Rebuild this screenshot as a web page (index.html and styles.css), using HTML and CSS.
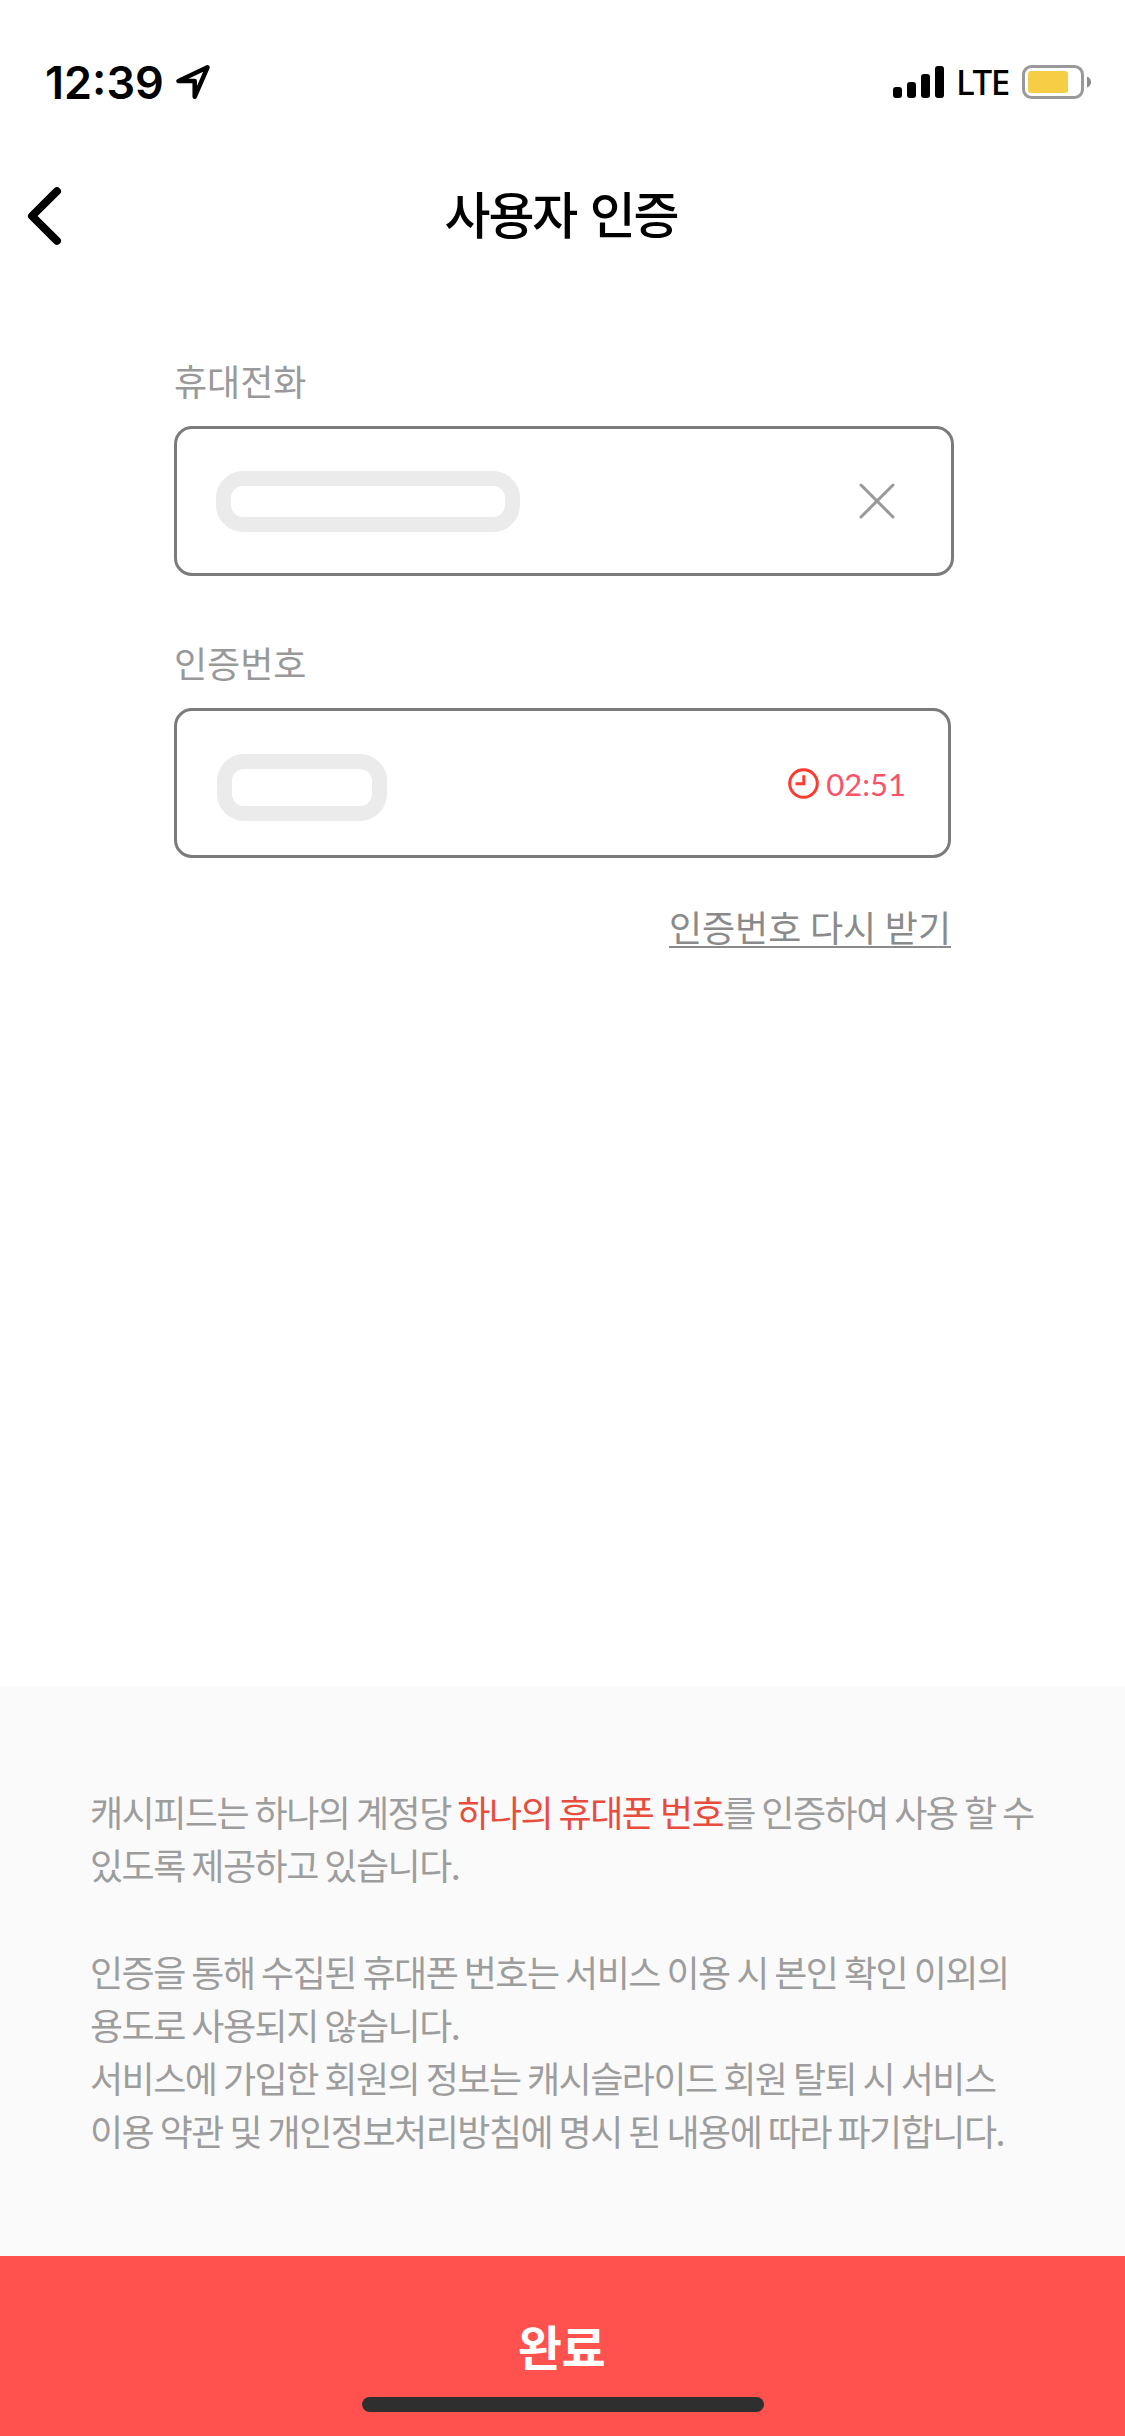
FILE: index.html
```html
<!DOCTYPE html>
<html lang="ko">
<head>
<meta charset="utf-8">
<title>사용자 인증</title>
<link rel="stylesheet" href="styles.css">
</head>
<body>
<div class="screen">
  <div class="status">
    <span class="clock">12:39</span>
    <svg class="location" width="36" height="36" viewBox="0 0 36 36"><path d="M32.2 3 L3.2 16.7 H19.4 V32.5 Z" transform="translate(.3 .3)"/></svg>
    <svg class="signal" width="51" height="32" viewBox="0 0 51 32"><rect x="0" y="21" width="9" height="11" rx="3"/><rect x="14" y="16" width="9" height="16" rx="3"/><rect x="28" y="8" width="9" height="24" rx="3"/><rect x="42" y="0" width="9" height="32" rx="3"/></svg>
    <span class="network">LTE</span>
    <svg class="battery" width="70" height="34" viewBox="0 0 70 34"><rect x="1.5" y="1.5" width="59" height="31" rx="8" fill="none" stroke="#999" stroke-width="3"/><rect x="6" y="6" width="40" height="22" rx="3" fill="#f6ce46"/><path d="M65 11.5 Q69 13 69 17 Q69 21 65 22.5 Z" fill="#8c8c8c"/></svg>
  </div>
  <header class="nav">
    <svg class="back" width="36" height="60" viewBox="0 0 36 60"><path d="M31 5.2 L6 30 L31 54.8"/></svg>
    <h1 class="title">사용자 인증</h1>
  </header>
  <main class="form">
    <label class="label">휴대전화</label>
    <div class="field field-phone">
      <span class="mask mask-phone"></span>
      <svg class="clear" width="36" height="36" viewBox="0 0 36 36"><path d="M2 2 L34 34 M34 2 L2 34"/></svg>
    </div>
    <label class="label">인증번호</label>
    <div class="field field-code">
      <span class="mask mask-code"></span>
      <div class="timer">
        <svg width="32" height="32" viewBox="0 0 32 32"><circle cx="15.5" cy="15.5" r="13.8"/><path d="M15.8 7.3 V15.7 H7.5"/></svg>
        <span>02:51</span>
      </div>
    </div>
    <a class="resend">인증번호 다시 받기</a>
  </main>
  <section class="notice">
    <p>캐시피드는 하나의 계정당 <em>하나의 휴대폰 번호</em>를 인증하여 사용 할 수<br>있도록 제공하고 있습니다.</p>
    <p>인증을 통해 수집된 휴대폰 번호는 서비스 이용 시 본인 확인 이외의<br>용도로 사용되지 않습니다.<br>서비스에 가입한 회원의 정보는 캐시슬라이드 회원 탈퇴 시 서비스<br>이용 약관 및 개인정보처리방침에 명시 된 내용에 따라 파기합니다.</p>
  </section>
  <footer class="submit">
    <span class="submit-text">완료</span>
    <div class="home"></div>
  </footer>
</div>
</body>
</html>
```
FILE: styles.css
```css
* { box-sizing: border-box; }
body {
  margin: 0;
  background: #fff;
  font-family: "Noto Sans CJK KR", sans-serif;
}
.screen {
  width: 1125px;
  height: 2436px;
  display: flex;
  flex-direction: column;
  overflow: hidden;
}
.status {
  height: 132px;
  padding: 32px 33px 0 45px;
  display: flex;
  align-items: center;
}
.clock {
  width: 130px;
  padding-top: 1px;
  font: 600 45px/60px Inter, sans-serif;
  white-space: nowrap;
}
.location {
  fill: none;
  stroke: #000;
  stroke-width: 4.5;
  stroke-linejoin: round;
}
.signal { margin-left: auto; }
.network {
  width: 63px;
  margin: 0 0 0 12px;
  font: 500 35px/50px "Noto Sans", sans-serif;
  letter-spacing: -1.5px;
}
.battery { margin-left: 3px; }
.nav {
  height: 168px;
  padding: 0 26px;
  display: grid;
  grid-template-columns: 36px 1fr 36px;
  align-items: center;
}
.back {
  fill: none;
  stroke: #000;
  stroke-width: 8;
  stroke-linecap: round;
  stroke-linejoin: round;
}
.title {
  margin: 0;
  padding: 0 3px 8px 0;
  text-align: center;
  font-size: 50px;
  line-height: 72px;
  font-weight: 500;
  letter-spacing: -2.1px;
  word-spacing: 1.5px;
}
.form {
  height: 1386px;
  padding: 54px 171px 0 174px;
  display: flex;
  flex-direction: column;
  align-items: flex-start;
}
.label {
  height: 72px;
  font-size: 36px;
  line-height: 52px;
  color: #999;
}
.field {
  height: 150px;
  display: flex;
  align-items: center;
  justify-content: space-between;
  border: 3px solid #7b7b7b;
  border-radius: 18px;
}
.field-phone {
  width: 780px;
  margin-bottom: 60px;
  padding: 0 56px 0 39px;
}
.field-code {
  width: 777px;
  padding: 0 42px 0 40px;
}
.mask {
  border: 15px solid #ebebeb;
  border-radius: 27px;
}
.mask-phone { width: 304px; height: 61px; }
.mask-code { width: 170px; height: 67px; margin-top: 9px; }
.clear {
  fill: none;
  stroke: #999;
  stroke-width: 3;
  stroke-linecap: round;
}
.timer {
  display: flex;
  align-items: center;
  gap: 6px;
  padding-top: 2px;
  color: #fb5268;
  font: 400 31px/40px Lato, sans-serif;
}
.timer svg {
  fill: none;
  stroke: #ff3b30;
  stroke-width: 3;
}
.resend {
  align-self: flex-end;
  height: 48px;
  margin: 42px 3px 0 0;
  font-size: 36px;
  line-height: 52px;
  word-spacing: -1.5px;
  color: #8a8a8a;
  border-bottom: 2px solid #8a8a8a;
}
.notice {
  height: 570px;
  padding: 99px 80px 0 90px;
  background: #fafafa;
  color: #9d9d9d;
  font-size: 36px;
  line-height: 53.2px;
  letter-spacing: -1.5px;
  word-spacing: -2.1px;
  white-space: nowrap;
}
.notice p { margin: 0 0 53.2px; }
.notice em { font-style: normal; color: #e74c3c; }
.submit {
  height: 180px;
  padding-top: 53px;
  display: flex;
  flex-direction: column;
  align-items: center;
  background: #ff524f;
}
.submit-text {
  padding-right: 2px;
  color: #fff;
  font-size: 48px;
  line-height: 72px;
  font-weight: 700;
  letter-spacing: -.4px;
}
.home {
  width: 402px;
  height: 15px;
  margin-top: 16px;
  border-radius: 8px;
  background: #2f2f2f;
}
```
